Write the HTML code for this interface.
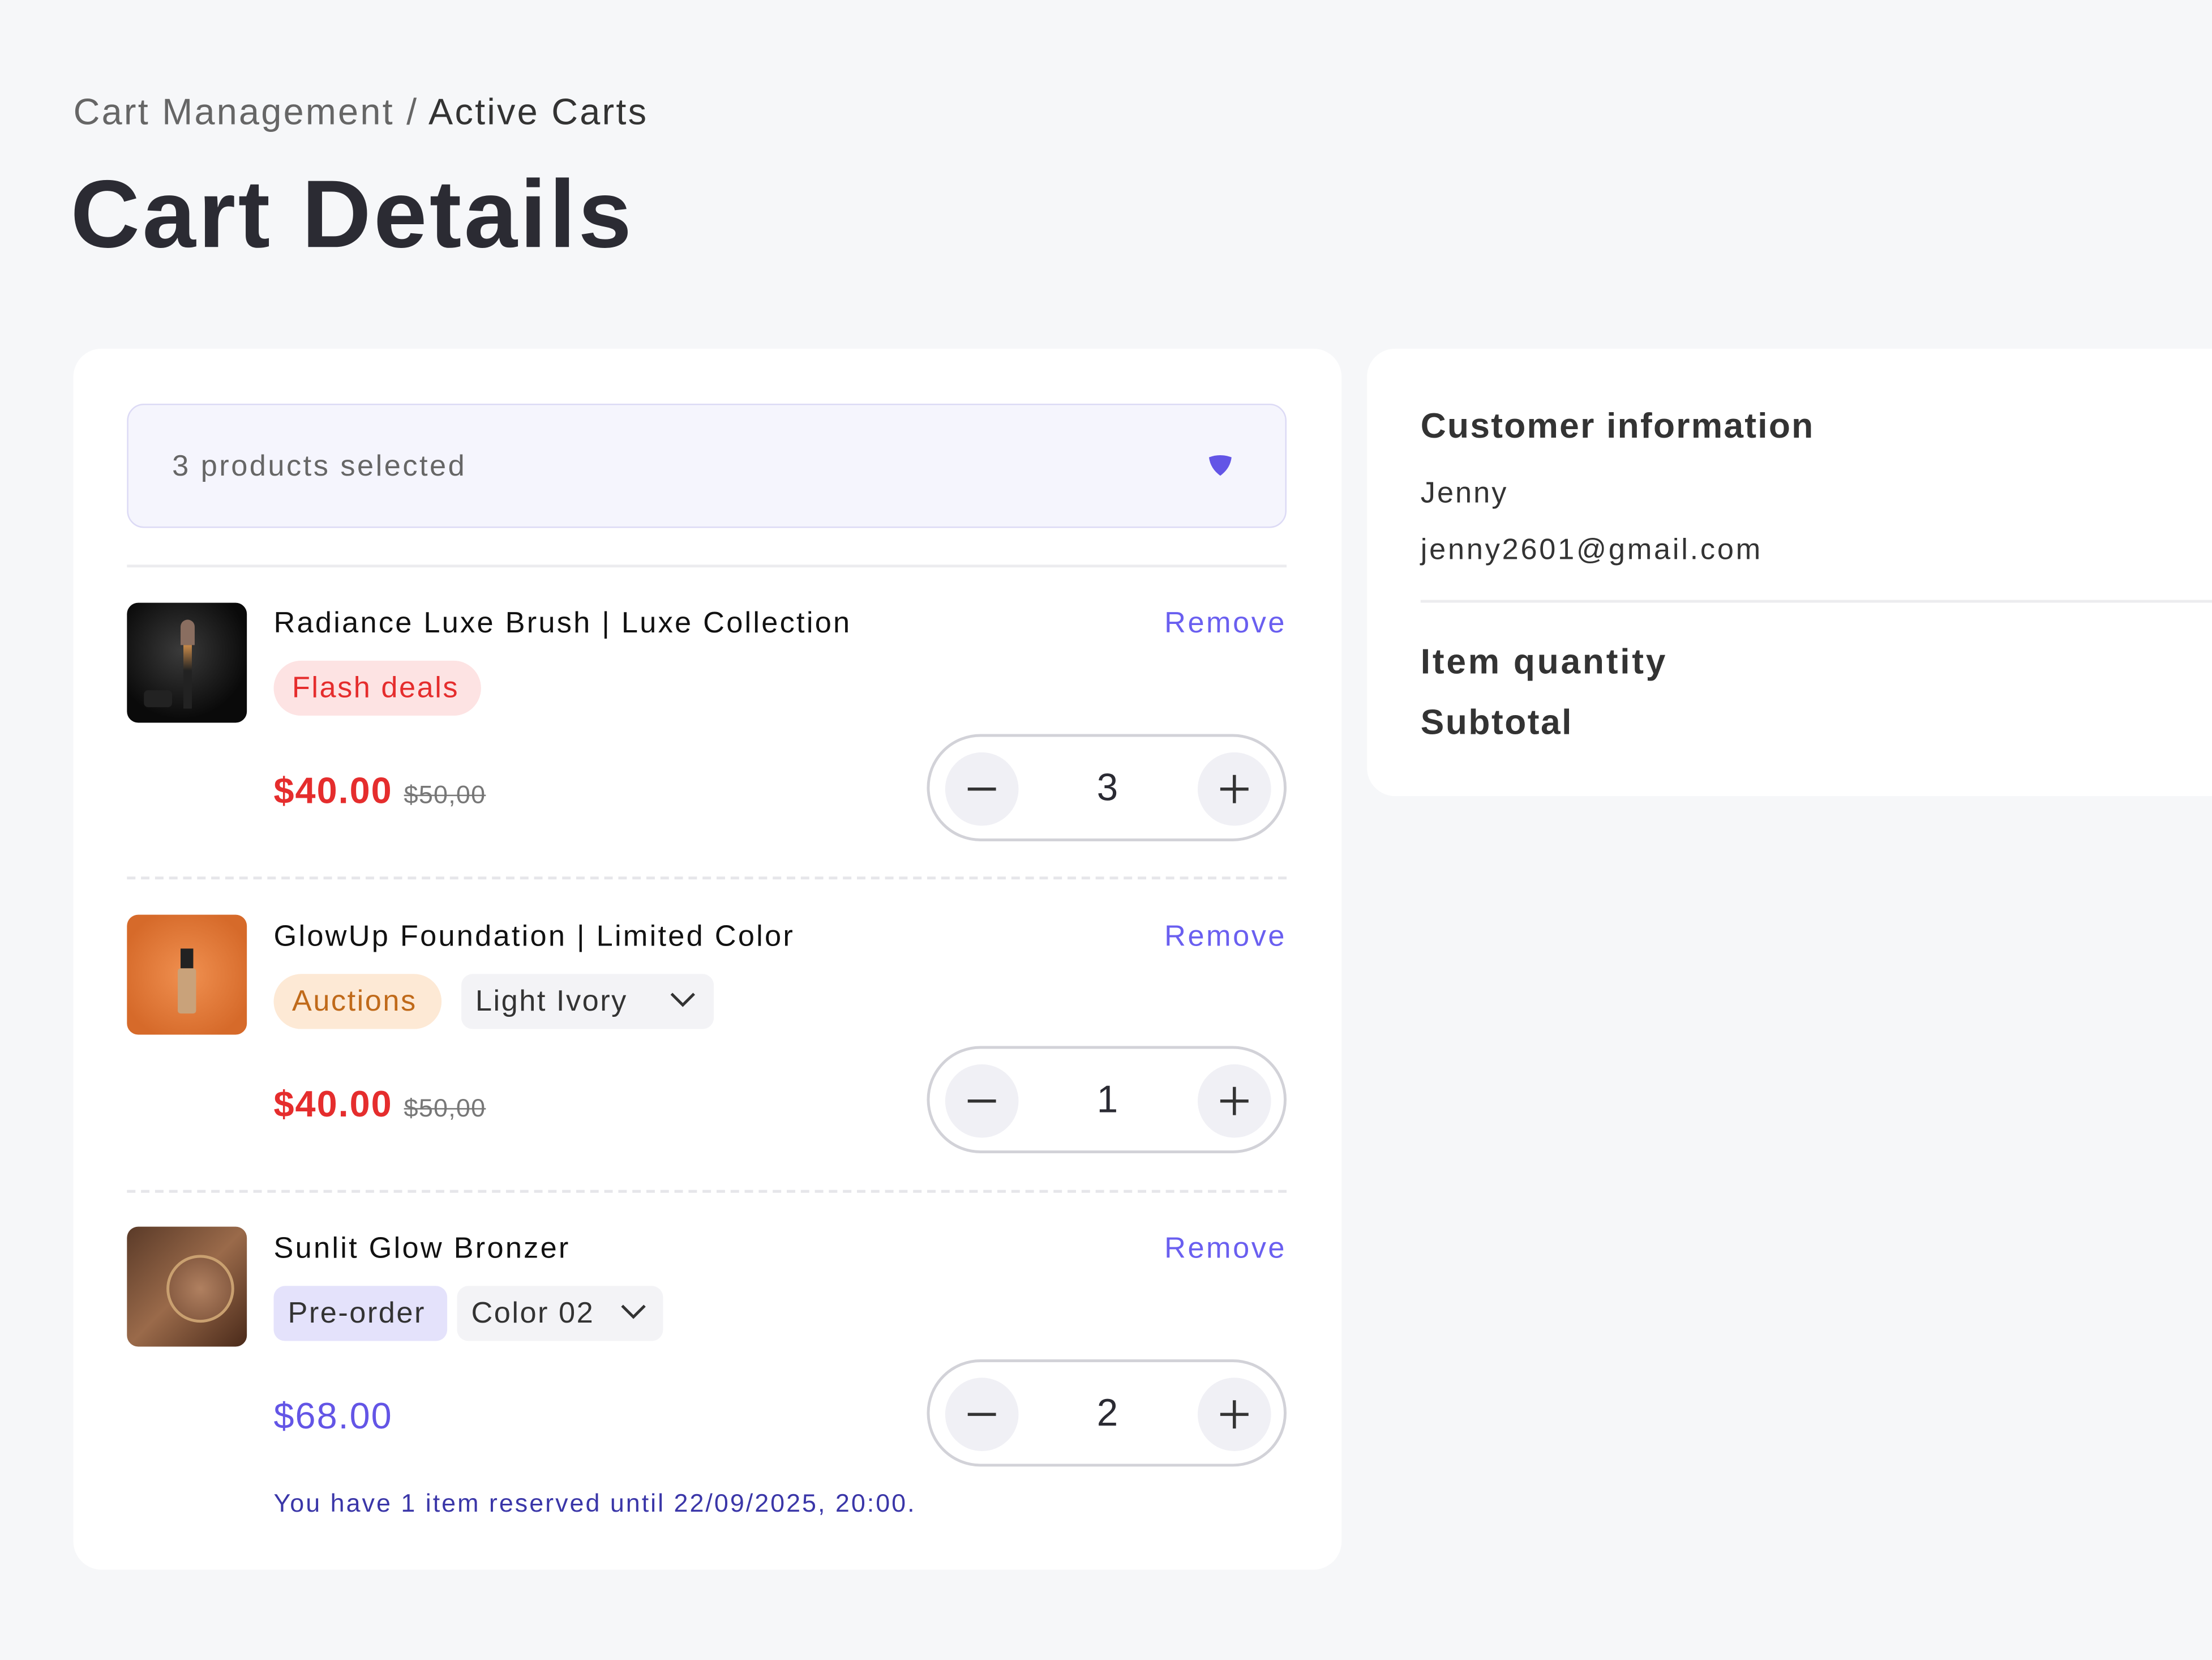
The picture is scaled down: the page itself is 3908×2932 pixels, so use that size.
<!DOCTYPE html>
<html><head><meta charset="utf-8"><style>
html,body{margin:0;padding:0;background:#f6f7f9;overflow:hidden}
body{width:3908px;height:2932px}
#s{position:absolute;left:0;top:0;width:1568px;height:1176px;transform:scale(2.49235,2.4932);transform-origin:0 0;font-family:"Liberation Sans",sans-serif;color:#222;letter-spacing:1.2px}
.a{position:absolute;white-space:nowrap}
.card{position:absolute;background:#fff;border-radius:20px}
.tag{position:absolute;height:39px;line-height:39px;border-radius:20px;font-size:21px;padding:0 13px;box-sizing:border-box}
.step{position:absolute;left:657px;width:255px;height:76px;border:2px solid #d2d2d8;border-radius:40px;box-sizing:border-box;background:#fff}
.btn{position:absolute;top:11px;width:52px;height:52px;border-radius:50%;background:#f0f0f5}
.num{position:absolute;left:100px;width:52px;top:0;line-height:72px;text-align:center;font-size:27px;color:#2b2b33;letter-spacing:0}
.rm{position:absolute;right:656px;font-size:21px;color:#6a5ff0;line-height:26px;letter-spacing:1.4px}
.ttl{position:absolute;left:194px;font-size:21px;color:#111;line-height:26px;letter-spacing:1.3px}
.pr{position:absolute;left:194px;font-size:26px;font-weight:bold;line-height:30px;letter-spacing:0.8px}
.old{font-size:18px;color:#777;text-decoration:line-through;font-weight:normal;margin-left:8px;letter-spacing:0.5px}
.img{position:absolute;left:90px;width:85px;height:85px;border-radius:8px;overflow:hidden}
.dash{position:absolute;left:90px;width:822px;border-top:2px dashed #e6e6ea}
</style></head><body><div id="s">
<div class="a" style="left:52px;top:64px;font-size:26px;color:#666;letter-spacing:1.3px">Cart Management / <span style="color:#333">Active Carts</span></div>
<div class="a" style="left:50px;top:113px;font-size:68px;font-weight:bold;color:#2b2b33;letter-spacing:1.8px">Cart Details</div>

<div class="card" style="left:52px;top:247px;width:899px;height:865px"></div>
<div class="card" style="left:969px;top:247px;width:620px;height:317px"></div>

<div class="a" style="left:90px;top:286px;width:822px;height:88px;background:#f5f5fd;border:1.5px solid #dcdaf5;border-radius:12px;box-sizing:border-box"></div>
<div class="a" style="left:122px;top:319px;font-size:21px;color:#666;letter-spacing:1.4px">3 products selected</div>
<svg class="a" style="left:856px;top:322px" width="18" height="16" viewBox="0 0 18 16"><path d="M1 2 Q9 -1 17 2 Q16 10 9 15 Q2 10 1 2Z" fill="#6355e6"/></svg>
<div class="a" style="left:90px;top:400px;width:822px;border-top:2px solid #ececef"></div>

<!-- item1 -->
<div class="img" style="top:427px;background:radial-gradient(circle at 45% 40%,#3a3a3a,#0a0a0a 70%)">
<div class="a" style="left:38px;top:12px;width:10px;height:18px;background:#8a6e60;border-radius:5px 5px 0 0"></div>
<div class="a" style="left:40px;top:30px;width:6px;height:45px;background:linear-gradient(#c88a4a,#222 40%)"></div>
<div class="a" style="left:12px;top:62px;width:20px;height:12px;background:#222;border-radius:3px"></div>
</div>
<div class="ttl" style="top:429px">Radiance Luxe Brush | Luxe Collection</div>
<div class="rm" style="top:429px">Remove</div>
<div class="tag" style="left:194px;top:468px;width:147px;background:#fde3e3;color:#e52d2d;letter-spacing:1px">Flash deals</div>
<div class="pr" style="top:545px;color:#e52d2d">$40.00<span class="old">$50,00</span></div>
<div class="step" style="top:520px"><div class="btn" style="left:11px"></div><div class="btn" style="left:190px"></div><div class="num">3</div>
<svg class="a" style="left:24px;top:24px" width="26" height="26"><path d="M3 13H23" stroke="#333" stroke-width="2.2"/></svg>
<svg class="a" style="left:203px;top:24px" width="26" height="26"><path d="M3 13H23M13 3V23" stroke="#333" stroke-width="2.2"/></svg></div>
<div class="dash" style="top:621px"></div>

<!-- item2 -->
<div class="img" style="top:648px;background:radial-gradient(circle at 50% 50%,#f09050,#d66a2a 80%)">
<div class="a" style="left:38px;top:24px;width:9px;height:14px;background:#222"></div>
<div class="a" style="left:36px;top:38px;width:13px;height:32px;background:#c9a27a;border-radius:2px"></div>
</div>
<div class="ttl" style="top:651px">GlowUp Foundation | Limited Color</div>
<div class="rm" style="top:651px">Remove</div>
<div class="tag" style="left:194px;top:690px;width:119px;background:#fde9d5;color:#c06a1a;letter-spacing:1px">Auctions</div>
<div class="tag" style="left:327px;top:690px;width:179px;background:#f3f3f6;color:#333;border-radius:8px;padding-left:10px;letter-spacing:1px">Light Ivory</div>
<svg class="a" style="left:474px;top:701px" width="20" height="14"><path d="M2 3L10 11L18 3" fill="none" stroke="#333" stroke-width="2"/></svg>
<div class="pr" style="top:767px;color:#e52d2d">$40.00<span class="old">$50,00</span></div>
<div class="step" style="top:741px"><div class="btn" style="left:11px"></div><div class="btn" style="left:190px"></div><div class="num">1</div>
<svg class="a" style="left:24px;top:24px" width="26" height="26"><path d="M3 13H23" stroke="#333" stroke-width="2.2"/></svg>
<svg class="a" style="left:203px;top:24px" width="26" height="26"><path d="M3 13H23M13 3V23" stroke="#333" stroke-width="2.2"/></svg></div>
<div class="dash" style="top:843px"></div>

<!-- item3 -->
<div class="img" style="top:869px;background:linear-gradient(135deg,#5a3a28,#9a6a4a 50%,#4a2a1a)">
<div class="a" style="left:28px;top:20px;width:44px;height:44px;border-radius:50%;background:radial-gradient(#b08060,#7a5038);border:2px solid #c9a070"></div>
</div>
<div class="ttl" style="top:872px">Sunlit Glow Bronzer</div>
<div class="rm" style="top:872px">Remove</div>
<div class="tag" style="left:194px;top:911px;width:123px;background:#e4e2fb;color:#333;border-radius:8px;padding-left:10px;letter-spacing:1px">Pre-order</div>
<div class="tag" style="left:324px;top:911px;width:146px;background:#f3f3f6;color:#333;border-radius:8px;padding-left:10px;letter-spacing:1px">Color 02</div>
<svg class="a" style="left:439px;top:922px" width="20" height="14"><path d="M2 3L10 11L18 3" fill="none" stroke="#333" stroke-width="2"/></svg>
<div class="pr" style="top:988px;color:#6355e6;font-weight:normal">$68.00</div>
<div class="step" style="top:963px"><div class="btn" style="left:11px"></div><div class="btn" style="left:190px"></div><div class="num">2</div>
<svg class="a" style="left:24px;top:24px" width="26" height="26"><path d="M3 13H23" stroke="#333" stroke-width="2.2"/></svg>
<svg class="a" style="left:203px;top:24px" width="26" height="26"><path d="M3 13H23M13 3V23" stroke="#333" stroke-width="2.2"/></svg></div>
<div class="a" style="left:194px;top:1055px;font-size:18px;color:#3a36a8;letter-spacing:1.2px">You have 1 item reserved until 22/09/2025, 20:00.</div>

<!-- right -->
<div class="a" style="left:1007px;top:288px;font-size:25px;font-weight:bold;color:#333;letter-spacing:0.9px">Customer information</div>
<div class="a" style="left:1007px;top:338px;font-size:21px;color:#333">Jenny</div>
<div class="a" style="left:1007px;top:378px;font-size:21px;color:#333;letter-spacing:1.5px">jenny2601@gmail.com</div>
<div class="a" style="left:1007px;top:425px;width:561px;border-top:2px solid #ececef"></div>
<div class="a" style="left:1007px;top:455px;font-size:25px;font-weight:bold;color:#333;letter-spacing:1.5px">Item quantity</div>
<div class="a" style="left:1007px;top:498px;font-size:25px;font-weight:bold;color:#333;letter-spacing:1px">Subtotal</div>
</div></body></html>
